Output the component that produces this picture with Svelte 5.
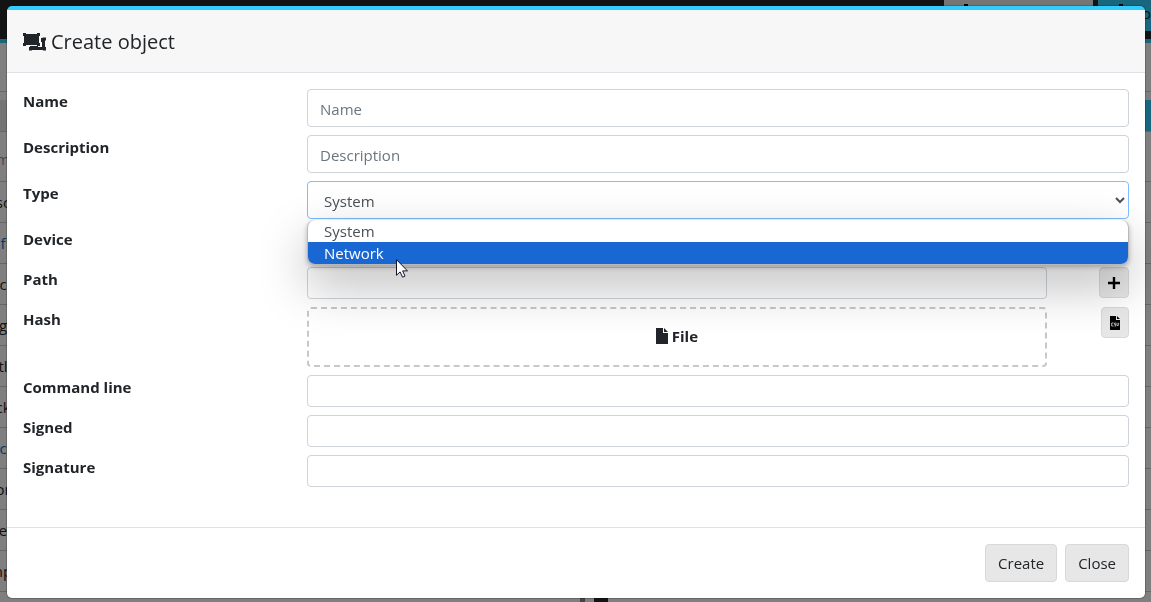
<script>
  let form = $state({
    name: '', description: '', type: 'System', path: '', command: '', signed: '', signature: '',
  });

  const types = ['System', 'Network'];
  const highlighted = 'Network';

  const listing = [
    { text: 'm', tone: 'muted' },
    { text: 'sc' },
    { text: 'f', tone: 'link' },
    { text: 'c' },
    { text: 'g' },
    { text: 'tl' },
    { text: 'ck' },
    { text: 'c', tone: 'link' },
    { text: 'or' },
    { text: 'e' },
    { text: 'np' },
    { text: '' },
  ];

  const textFields = [
    { key: 'command', label: 'Command line' },
    { key: 'signed', label: 'Signed' },
    { key: 'signature', label: 'Signature' },
  ];
</script>

<div class="page" aria-hidden="true">
  <div class="navbar">
    <span class="nav-tab"><i></i></span>
    <span class="nav-action"><i></i>o</span>
  </div>
  <div class="toolbar"></div>
  <div class="filter"><span></span></div>
  <div class="listing">
    {#each listing as item}
      <div class="listing-row {item.tone ?? ''}"><span>{item.text}</span></div>
    {/each}
  </div>
  <div class="page-footer"><span class="mark small"></span><span class="mark"></span></div>
</div>

<div class="backdrop">
  <div class="modal" role="dialog" aria-labelledby="modal-title">
    <header class="modal-header">
      <svg class="title-icon" viewBox="0 0 23 18" aria-hidden="true">
        <path d="M0 0h3v1h11V0h3v3h-1v7h1v3h-3v-1H3v1H0v-3h1V3H0z" />
        <path d="M18 5h1.500V4.500H23v3h-1V14h1v3.500h-3V17H9v.5H6V14h1v-1h8v1h4V9h-1z" />
      </svg>
      <h5 id="modal-title">Create object</h5>
    </header>

    <div class="modal-body">
      <div class="row">
        <label for="name">Name</label>
        <input id="name" class="control" type="text" placeholder="Name" bind:value={form.name} />
      </div>
      <div class="row">
        <label for="description">Description</label>
        <input id="description" class="control" type="text" placeholder="Description" bind:value={form.description} />
      </div>
      <div class="row">
        <label for="type">Type</label>
        <div class="select-wrap">
          <select id="type" class="control" bind:value={form.type}>
            {#each types as type}
              <option>{type}</option>
            {/each}
          </select>
          <ul class="options">
            {#each types as type}
              <li class:active={type === highlighted}>{type}</li>
            {/each}
          </ul>
          <svg class="cursor" viewBox="0 0 12 19" aria-hidden="true">
            <path d="M.5.7v15.600l3.600-3.400 2.400 5.300 2.500-1.100-2.400-5.200h4.900z" />
          </svg>
        </div>
      </div>
      <div class="row">
        <span class="label">Device</span>
      </div>
      <div class="row">
        <label for="path">Path</label>
        <div class="with-action">
          <input id="path" class="control small" type="text" bind:value={form.path} />
          <button type="button" class="btn btn-sm" aria-label="Add path">
            <svg class="plus" viewBox="0 0 12 12" aria-hidden="true"><path d="M4.800 0h2.400v4.800H12v2.400H7.200V12H4.800V7.200H0V4.800h4.800z" /></svg>
          </button>
        </div>
      </div>
      <div class="row">
        <span class="label">Hash</span>
        <div class="with-action">
          <button type="button" class="dropzone">
            <svg class="file" viewBox="0 0 12 16" aria-hidden="true"><path d="M0 0h7v5h5v11H0zM8 0l4 4H8z" /></svg>
            File
          </button>
          <button type="button" class="btn btn-sm" aria-label="Import CSV">
            <svg class="csv" viewBox="0 0 10 14" aria-hidden="true">
              <path d="M0 0h6v4h4v10H0zM7 0l3 3H7z" />
              <path class="cut" d="M3.500 7H1.700v3h1.800M6 7H4.600v1.500h1.300V10H4.500M7 6.800v1.700L7.800 10l.8-1.500V6.800" />
            </svg>
          </button>
        </div>
      </div>
      {#each textFields as field}
        <div class="row">
          <label for={field.key}>{field.label}</label>
          <input id={field.key} class="control small" type="text" bind:value={form[field.key]} />
        </div>
      {/each}
    </div>

    <footer class="modal-footer">
      <button type="button" class="btn">Create</button>
      <button type="button" class="btn">Close</button>
    </footer>
  </div>
</div>

<style>
  :global(body) {
    overflow: hidden;
    font-family: "Open Sans", "Noto Sans", sans-serif;
    font-size: 15px;
    line-height: 24px;
    color: #212529;
  }

  * {
    box-sizing: border-box;
  }

  .page {
    height: 100vh;
    display: flex;
    flex-direction: column;
    overflow: hidden;
    background: #fff;
  }

  .navbar {
    display: flex;
    justify-content: flex-end;
    align-items: flex-start;
    gap: 5px;
    height: 43px;
    flex-shrink: 0;
    background: #262626;
    border-bottom: 4px solid #33ccff;
  }

  .nav-tab,
  .nav-action {
    height: 31px;
  }

  .nav-tab {
    width: 149px;
    padding: 4px 20px;
    background: #eaeaea;
  }

  .navbar i {
    width: 4px;
    height: 12px;
    background: #000;
  }

  .nav-tab i {
    display: block;
  }

  .nav-action {
    display: flex;
    justify-content: space-between;
    width: 53px;
    padding: 4px 0 0 21px;
    line-height: 18px;
    background: #33ccff;
  }

  .toolbar {
    height: 49px;
    flex-shrink: 0;
    border-bottom: 1px solid #d0d0d0;
  }

  .filter {
    display: flex;
    justify-content: flex-end;
    height: 39px;
    flex-shrink: 0;
    padding-top: 8px;
    background: linear-gradient(#fff 8px, #e8e8e8 8px);
  }

  .filter span {
    width: 20px;
    background: #33ccff;
  }

  .listing {
    flex: 1;
    min-height: 0;
    overflow: hidden;
  }

  .listing-row {
    display: flex;
    align-items: center;
    height: 41px;
    border-top: 1px solid #ccc;
  }

  .listing-row:first-child {
    height: 50px;
    padding-top: 4px;
  }

  .listing-row span {
    display: flex;
    justify-content: center;
    width: 6px;
  }

  .muted {
    color: #9a8cb0;
  }

  .link {
    color: #006fd6;
  }

  .page-footer {
    display: flex;
    justify-content: center;
    gap: 9px;
    height: 4px;
    flex-shrink: 0;
    padding-left: 37px;
  }

  .mark {
    width: 14px;
    background: #262626;
  }

  .mark.small {
    width: 5px;
    background: #888;
  }

  .backdrop {
    position: fixed;
    inset: 0;
    background: rgba(0, 0, 0, 0.5);
  }

  .modal {
    margin: 6px 6px 4px 7px;
    background: #fff;
    border-top: 4px solid #33ccff;
    border-radius: 5px;
    box-shadow: 0 0 0 1px rgba(0, 0, 0, 0.2);
  }

  .modal-header {
    display: flex;
    align-items: center;
    gap: 5px;
    height: 63px;
    padding: 2px 16px 0;
    background: #f7f7f7;
    border-bottom: 1px solid #dee2e6;
  }

  .modal-header h5 {
    margin: 0;
    font-size: 20px;
    line-height: 30px;
    font-weight: 500;
  }

  .title-icon {
    width: 23px;
    height: 18px;
    fill: #212529;
  }

  .modal-body {
    display: flex;
    flex-direction: column;
    gap: 8px;
    padding: 16px 16px 40px;
  }

  .row {
    display: grid;
    grid-template-columns: minmax(0, 284fr) minmax(0, 822fr);
    align-items: start;
    min-height: 32px;
  }

  label,
  .label {
    font-weight: 700;
  }

  .control {
    display: block;
    width: 100%;
    height: 38px;
    padding: 8px 12px 6px;
    font: inherit;
    line-height: 22px;
    color: #495057;
    background: #fff;
    border: 1px solid #ced4da;
    border-radius: 4px;
    outline: none;
  }

  .control.small {
    height: 32px;
    padding: 4px 8px;
  }

  .control::placeholder {
    color: #6c757d;
  }

  select.control {
    border-color: #80bdff;
  }

  .select-wrap {
    position: relative;
  }

  .options {
    position: absolute;
    top: 39px;
    left: 0;
    right: 0;
    z-index: 1;
    margin: 0;
    padding: 0;
    overflow: hidden;
    list-style: none;
    line-height: 22px;
    color: #495057;
    background: #fff;
    border: 1px solid #b8b8b8;
    border-top: 0;
    border-radius: 8px;
    box-shadow: 0 20px 50px rgba(0, 0, 0, 0.28), 0 2px 5px rgba(0, 0, 0, 0.25);
  }

  .options li {
    padding: 0 16px;
  }

  .options .active {
    color: #fff;
    background: #1967d2;
  }

  .cursor {
    position: absolute;
    top: 78px;
    left: 89px;
    z-index: 2;
    width: 12px;
    height: 19px;
    fill: #fff;
    stroke: #15152a;
  }

  .with-action {
    display: grid;
    grid-template-columns: 9fr 1fr;
    align-items: start;
  }

  .btn {
    height: 38px;
    padding: 0 12px;
    font: inherit;
    color: #212529;
    background: #e7e7e7;
    border: 1px solid #d8d8d8;
    border-radius: 4px;
  }

  .btn-sm {
    display: flex;
    align-items: center;
    justify-self: end;
    height: 31px;
    padding: 0 8px;
  }

  .plus {
    width: 12px;
    height: 12px;
    fill: #000;
  }

  .csv {
    width: 10px;
    height: 14px;
    fill: #000;
  }

  .csv .cut {
    fill: none;
    stroke: #ddd;
    stroke-width: 0.8;
  }

  .dropzone {
    display: flex;
    align-items: center;
    justify-content: center;
    gap: 4px;
    height: 60px;
    padding: 0 0 2px;
    font: inherit;
    font-weight: 700;
    color: #212529;
    background: none;
    border: 2px dashed #c8c8c8;
    border-radius: 4px;
  }

  .file {
    width: 12px;
    height: 16px;
    fill: #212529;
  }

  .modal-footer {
    display: flex;
    justify-content: flex-end;
    gap: 8px;
    padding: 16px;
    border-top: 1px solid #dee2e6;
  }
</style>
